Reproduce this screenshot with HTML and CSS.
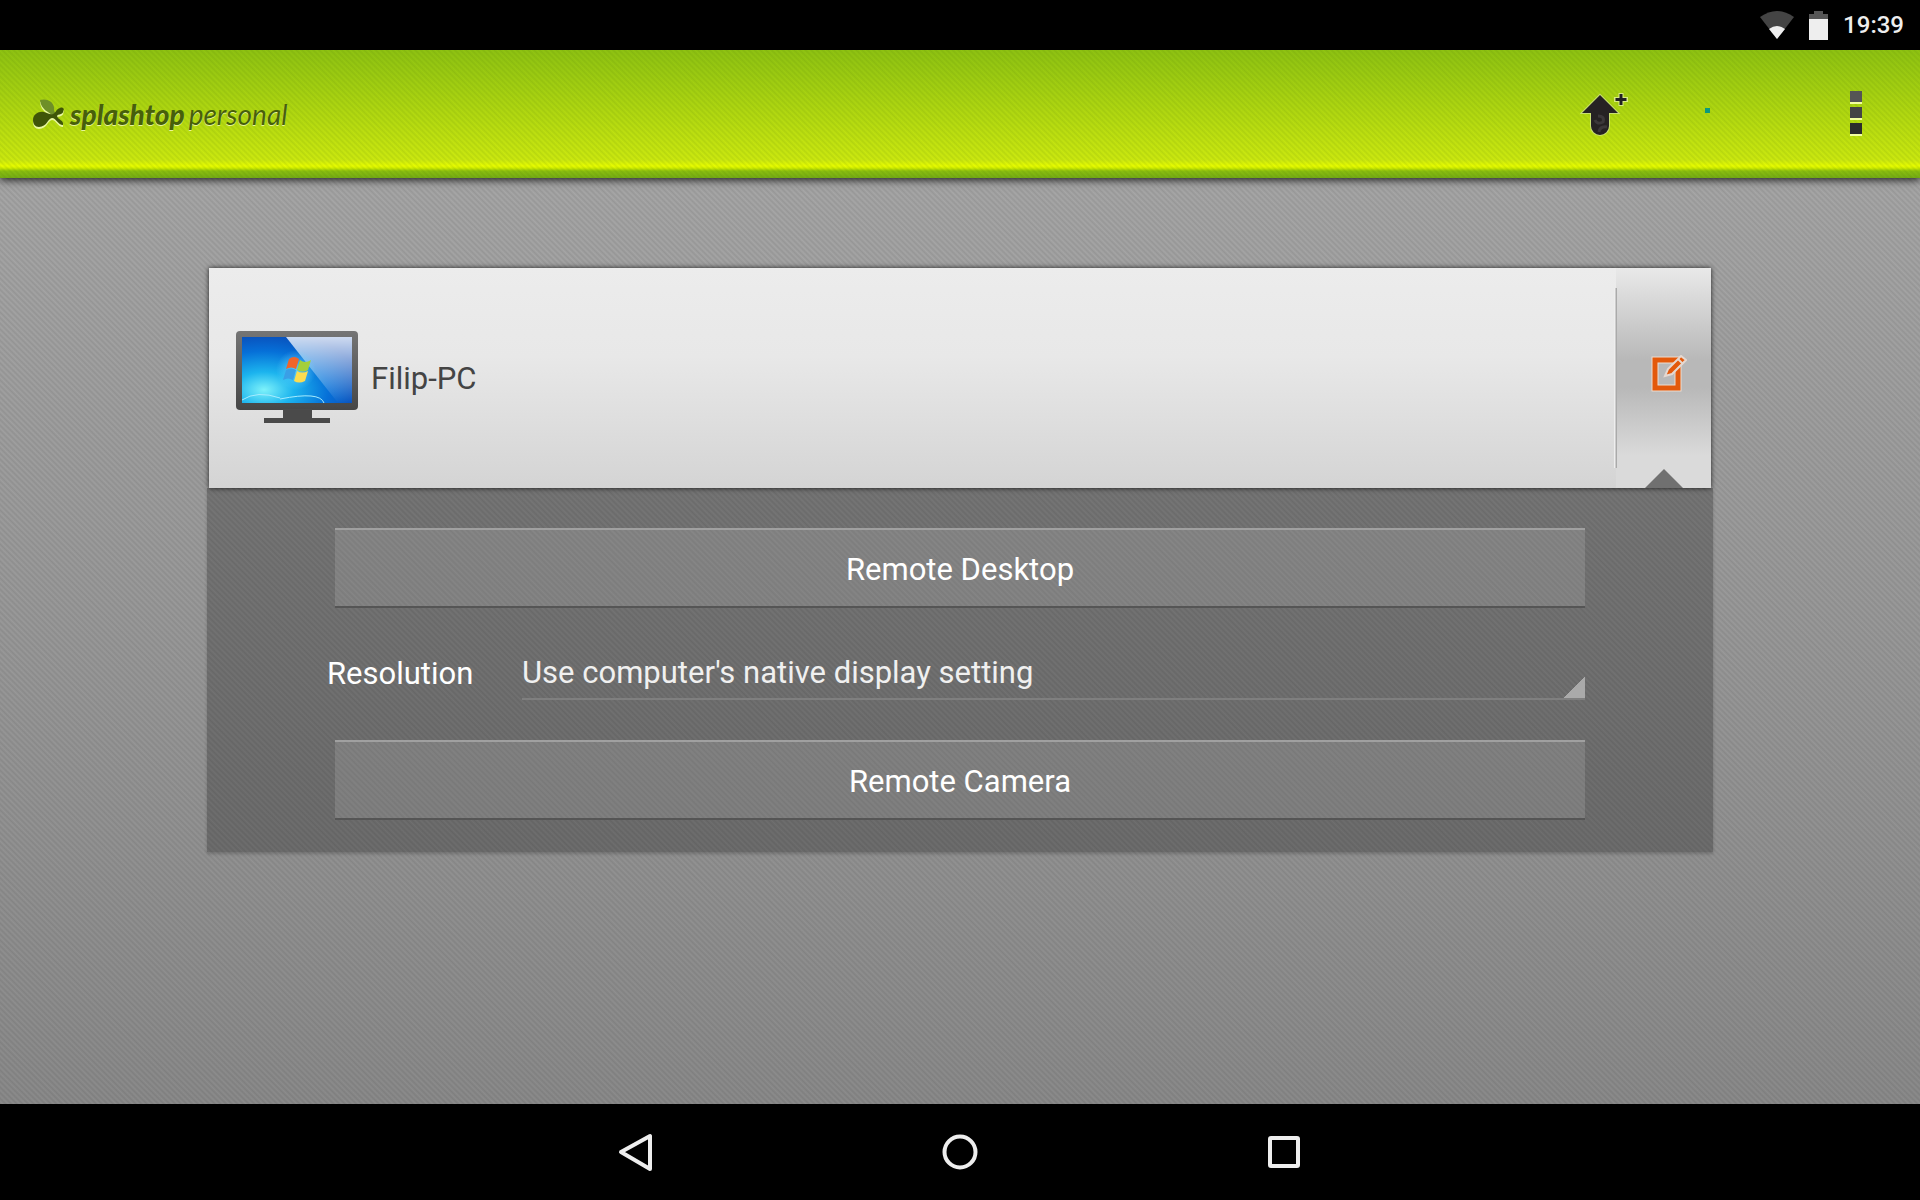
FILE: index.html
```html
<!DOCTYPE html>
<html lang="en">
<head>
    <meta charset="UTF-8">
    <meta name="viewport" content="width=device-width, initial-scale=1.0">
    <title>Splashtop Personal</title>
    <link rel="stylesheet" href="styles.css">
</head>
<body>
    <div class="status-bar">
        <svg class="wifi" width="34" height="28" viewBox="0 0 34 28">
            <path d="M0 6 Q17 -6 34 6 L17 28 Z" fill="#444"/>
            <path d="M9 18 Q17 12 25 18 L17 28 Z" fill="#eee"/>
        </svg>
        <svg class="battery" width="19" height="29" viewBox="0 0 19 29">
            <path d="M0 3 H5 V0 H14 V3 H19 V8 H0 Z" fill="#555"/>
            <path d="M0 8 H19 V29 H0 Z" fill="#eee"/>
        </svg>
        <span class="clock">19:39</span>
    </div>

    <header class="header">
        <div class="logo">
            <svg width="34" height="32" viewBox="0 0 34 32">
                <defs>
                    <path id="leaf" d="M8 2 C14 0 21 3 22 9 C22 12 22 14 24 15 L20 17 C17 14 9 12 8 2 Z"/>
                    <path id="drops" d="M1 22 C1 16 7 13 12 14 C16 15 18 17 21 16 C24 15 24 11 28 10 C30 9 31 10 32 11 C31 12 32 15 29 16 C27 17 26 16 25 18 C26 22 32 22 31 27 C26 27 24 20 20 20 C16 20 15 29 7 29 C3 29 1 26 1 22 Z"/>
                </defs>
                <g transform="translate(0 2)" fill="#eaf8a0">
                    <use href="#leaf"/>
                    <use href="#drops"/>
                </g>
                <use href="#leaf" fill="#6e8f28"/>
                <use href="#drops" fill="#3f5508"/>
            </svg>
            <span class="logo-bold">splashtop</span>
            <span class="logo-light">personal</span>
        </div>
        <div class="actions">
            <button class="action" aria-label="Upgrade">
                <svg width="48" height="44" viewBox="0 0 48 44">
                    <path d="M20 3 L38 21 H29 V34 A9 9 0 0 1 11 34 V21 H2 Z" fill="#262223" stroke="#c9e070" stroke-width="2" paint-order="stroke"/>
                    <path d="M18 24 Q25 24 23 30 Q17 33 15 28 M19 40 Q20 34 27 35" fill="none" stroke="#3c383a" stroke-width="3"/>
                    <path d="M41 1 V14 M34 7.500 H48" stroke="#d8ec80" stroke-width="5"/>
                    <path d="M41 2 V13 M35.500 7.500 H46.500" stroke="#222" stroke-width="3"/>
                </svg>
            </button>
            <span class="progress"></span>
            <button class="action" aria-label="More options">
                <svg width="12" height="48" viewBox="0 0 12 48">
                    <path d="M0 2 H12 V14 H0 Z M0 18 H12 V30 H0 Z M0 34 H12 V46 H0 Z" fill="#f3ffa0"/>
                    <path d="M0 1 H12 V12 H0 Z" fill="#555"/>
                    <path d="M0 17 H12 V28 H0 Z" fill="#444"/>
                    <path d="M0 33 H12 V44 H0 Z" fill="#2c2c2c"/>
                </svg>
            </button>
        </div>
    </header>

    <main class="main">
        <section class="computer">
            <div class="card">
                <svg class="monitor" width="124" height="96" viewBox="0 0 124 96">
                    <defs>
                        <linearGradient id="frame" x1="0" y1="0" x2="0" y2="1">
                            <stop offset="0" stop-color="#757575"/>
                            <stop offset="1" stop-color="#464646"/>
                        </linearGradient>
                        <radialGradient id="sky" cx="0.2" cy="0.8" r="0.9">
                            <stop offset="0" stop-color="#7df2fa"/>
                            <stop offset="0.300" stop-color="#1cb4ee"/>
                            <stop offset="0.650" stop-color="#0670d8"/>
                            <stop offset="1" stop-color="#0a48b4"/>
                        </radialGradient>
                        <linearGradient id="shine" x1="0" y1="0" x2="0" y2="1">
                            <stop offset="0" stop-color="#fff" stop-opacity="0.800"/>
                            <stop offset="1" stop-color="#fff" stop-opacity="0"/>
                        </linearGradient>
                        <radialGradient id="glow">
                            <stop offset="0" stop-color="#6fd8ff" stop-opacity="0.800"/>
                            <stop offset="1" stop-color="#6fd8ff" stop-opacity="0"/>
                        </radialGradient>
                    </defs>
                    <rect x="1" y="1" width="122" height="79" rx="4" fill="url(#frame)"/>
                    <path d="M48 79 H77 V88 H95 V93 H29 V88 H48 Z" fill="#4a4a4a"/>
                    <rect x="7" y="7" width="110" height="66" fill="url(#sky)"/>
                    <path d="M7 70 Q22 60 45 68 M45 69 Q85 61 89 73" fill="none" stroke="#a5ecff" stroke-width="1"/>
                    <path d="M51 7 H117 V73 H103 Z" fill="url(#shine)"/>
                    <circle cx="61" cy="40" r="20" fill="url(#glow)"/>
                    <path d="M54 29 Q59 25 64 29 L61 39 Q56 36 51 39 Z" fill="#f0642a"/>
                    <path d="M65 30 Q70 34 76 30 L73 40 Q68 43 62 40 Z" fill="#a3cf3c"/>
                    <path d="M51 40 Q56 37 61 40 L58 50 Q53 47 48 50 Z" fill="#3a9fe6"/>
                    <path d="M62 41 Q67 44 73 41 L70 51 Q64 54 59 51 Z" fill="#fbdc50"/>
                </svg>
                <h1 class="name">Filip-PC</h1>
                <button class="edit" aria-label="Edit computer">
                    <svg width="36" height="38" viewBox="0 0 36 38">
                        <rect x="4" y="5" width="23" height="28" fill="none" stroke="#ecdccf" stroke-width="7"/>
                        <rect x="4" y="5" width="23" height="28" fill="none" stroke="#e3590b" stroke-width="5"/>
                        <path d="M14 21 L17 14 L30 1 L35 5 L21 19 Z" fill="#e3590b" stroke="#e6d8d0" stroke-width="2"/>
                        <path d="M27 4 L32 9" stroke="#e6d8d0" stroke-width="2"/>
                    </svg>
                </button>
            </div>
            <div class="panel">
                <button class="remote">Remote Desktop</button>
                <div class="resolution">
                    <label for="resolution">Resolution</label>
                    <select id="resolution">
                        <option>Use computer's native display setting</option>
                    </select>
                </div>
                <button class="remote">Remote Camera</button>
            </div>
        </section>
    </main>

    <nav class="nav-bar">
        <button class="nav-button" aria-label="Back">
            <svg width="40" height="40" viewBox="0 0 40 40"><path d="M5 20 L34 4 V37 Z"/></svg>
        </button>
        <button class="nav-button" aria-label="Home">
            <svg width="40" height="40" viewBox="0 0 40 40"><circle cx="20" cy="20" r="15.500"/></svg>
        </button>
        <button class="nav-button" aria-label="Recent apps">
            <svg width="40" height="40" viewBox="0 0 40 40"><rect x="6" y="6" width="28" height="28" rx="1"/></svg>
        </button>
    </nav>
</body>
</html>
```

FILE: styles.css
```css
* {
    box-sizing: border-box;
}

body {
    margin: 0;
    min-height: 100vh;
    display: flex;
    flex-direction: column;
    background: #000;
    font-family: Roboto, sans-serif;
    font-size: 31px;
}

button {
    padding: 0;
    border: none;
    background: none;
    font: inherit;
    color: inherit;
    cursor: pointer;
}

svg {
    display: block;
}

.status-bar {
    height: 50px;
    padding: 0 16px;
    display: flex;
    align-items: center;
    justify-content: flex-end;
    color: #eee;
}

.battery {
    margin: 0 15px;
}

.clock {
    font-size: 24px;
    font-weight: 500;
}

.header {
    position: relative;
    height: 128px;
    padding: 0 58px 0 32px;
    display: flex;
    align-items: center;
    justify-content: space-between;
    background:
        repeating-linear-gradient(45deg, rgba(60, 100, 0, 0.12), transparent 2px, rgba(60, 100, 0, 0.12) 4px),
        linear-gradient(#8fc312, #cdea10 110px, #eaff00 116px, #d4f000 118px, #8cc010 121px, #74ac14);
    box-shadow: 0 2px 8px rgba(0, 0, 0, 0.8);
}

.logo {
    display: flex;
    align-items: center;
    color: #47600a;
    font-family: Lato, sans-serif;
    font-size: 28px;
    font-style: italic;
    line-height: 32px;
    text-shadow: 0 1px 0 #e8f59a;
}

.logo-bold {
    margin: 0 4px;
    font-weight: 900;
}

.logo-light {
    font-weight: 400;
}

.actions {
    display: flex;
    align-items: center;
}

.progress {
    width: 5px;
    height: 5px;
    margin: 0 140px 8px 77px;
    background: #0c9a7c;
}

.main {
    flex: 1;
    padding: 90px 207px;
    background:
        repeating-linear-gradient(45deg, rgba(0, 0, 0, 0.09), transparent 2px, rgba(0, 0, 0, 0.09) 4px),
        linear-gradient(#a7a7a7, #8b8b8b);
}

.card {
    position: relative;
    height: 220px;
    margin: 0 2px;
    padding-left: 26px;
    display: flex;
    align-items: center;
    background: linear-gradient(#ececec, #e8e8e8 40%, #d4d4d4);
    box-shadow: 0 0 5px rgba(0, 0, 0, 0.8);
}

.name {
    flex: 1;
    margin: 0 12px;
    color: #444;
    font-size: 31px;
    font-weight: 400;
}

.edit {
    align-self: stretch;
    width: 95px;
    padding: 0 0 8px 10px;
    display: flex;
    align-items: center;
    justify-content: center;
    background: linear-gradient(#e9e9e9, #b8b8b8 42%, #b8b8b8 54%, #dadada 85%);
}

/* divider between the name and the edit button */
.edit::before {
    content: '';
    position: absolute;
    top: 20px;
    right: 94px;
    width: 3px;
    height: 180px;
    background: linear-gradient(90deg, #fff, #999);
}

/* notch pointing at the open panel */
.edit::after {
    content: '';
    position: absolute;
    right: 28px;
    bottom: 0;
    width: 38px;
    height: 19px;
    background: #707070;
    clip-path: polygon(50% 0, 100% 100%, 0 100%);
}

.panel {
    padding: 40px 128px 32px;
    background: rgba(0, 0, 0, 0.25);
    color: #fff;
    box-shadow: 0 2px 3px rgba(0, 0, 0, 0.2);
}

.remote {
    display: block;
    width: 100%;
    height: 80px;
    padding-top: 2px;
    background: rgba(255, 255, 255, 0.13);
    border-top: 2px solid #a0a0a0;
    border-bottom: 2px solid #555;
}

.resolution {
    height: 132px;
    margin-left: -8px;
    padding-bottom: 2px;
    display: flex;
    align-items: center;
}

.resolution label {
    width: 195px;
}

.resolution select {
    flex: 1;
    height: 54px;
    padding: 0;
    appearance: none;
    border: none;
    border-bottom: 2px solid #7f7f7f;
    background: linear-gradient(135deg, transparent 50%, #aaa 50%) right bottom / 24px 24px no-repeat;
    background-origin: border-box;
    color: #f0f0f0;
    font: inherit;
}

.nav-bar {
    height: 96px;
    display: flex;
    align-items: center;
    justify-content: center;
    gap: 284px;
}

.nav-button svg {
    fill: none;
    stroke: #eee;
    stroke-width: 4;
    stroke-linejoin: round;
}
```
